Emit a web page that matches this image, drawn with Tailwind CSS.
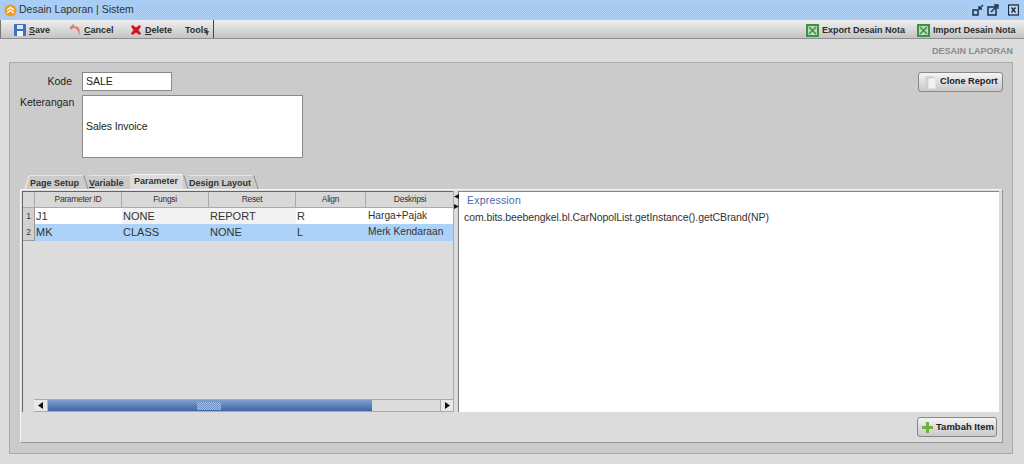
<!DOCTYPE html>
<html lang="id">
<head>
    <meta charset="UTF-8">
    <title>Desain Laporan | Sistem</title>
    <script src="https://cdn.jsdelivr.net/npm/@tailwindcss/browser@4"></script>
</head>
<body class="w-[1024px] h-[464px] overflow-hidden bg-[#dcdcdc] font-['Liberation_Sans',sans-serif] text-[10.5px] text-[#222]">
    <!-- Title bar -->
    <header class="h-[20px] bg-[#a9cdf5] flex items-center pl-[4px]">
        <svg width="13" height="13" viewBox="0 0 13 13"><circle cx="6.5" cy="6.5" r="6" fill="#f09a1e"/><path d="M3 6l3.500-2.500L10 6M3 9l3.500-2.500L10 9" fill="none" stroke="#fff" stroke-width="1.500"/></svg>
        <span class="ml-[2px] w-[118px] text-[10.500px] text-[#333] whitespace-nowrap">Desain Laporan | Sistem</span>
        <div class="w-[830px] h-[15px] bg-[repeating-conic-gradient(#9bc0ec_0_25%,#b4d4f7_0_50%)] bg-[length:2px_2px]"></div>
        <div class="flex items-center pl-[5px]">
            <svg width="12" height="12" viewBox="0 0 12 12" fill="none" stroke="#1c2f4a"><rect x="1" y="6" width="5" height="5" stroke-width="1.500"/><path d="M11 1L7 5M7 2v3h3" stroke-width="1.300"/></svg>
            <svg class="ml-[3px]" width="12" height="12" viewBox="0 0 12 12" fill="none" stroke="#1c2f4a"><rect x="1" y="3" width="8" height="8" stroke-width="1.500"/><path d="M4 8l7-7M7 1h4v4" stroke-width="1.300"/></svg>
            <svg class="ml-[9px]" width="11" height="12" viewBox="0 0 11 12" fill="#c5d9f0" stroke="#1c2f4a"><rect x="0.500" y="1" width="10" height="10" stroke-width="1.300"/><path d="M3.500 3.500l4 5M7.500 3.500l-4 5" stroke-width="1.500"/></svg>
        </div>
    </header>

    <!-- Toolbar -->
    <div class="h-[19px] border-b border-b-[#8f8f8f] bg-gradient-to-b from-[#f0f0f0] to-[#c4c4c4] flex items-center font-bold text-[9px] text-[#2c2c2c] whitespace-nowrap">
        <div class="flex items-center h-full w-[214px] border-x border-x-[#777] border-r-[#444] pl-[13px] pt-[2px]">
            <svg width="12" height="12" viewBox="0 0 12 12"><rect width="12" height="12" rx="1" fill="#3f6fc0"/><rect x="3" y="1" width="6" height="4" fill="#dce8f8"/><rect x="3" y="7" width="6" height="5" fill="#eef3fb"/></svg>
            <span class="ml-[3px] w-[39px] pt-[1px]"><u>S</u>ave</span>
            <svg width="14" height="14" viewBox="0 0 14 14"><path d="M5 1L1 5l3 2 1-2c3 0 5 2 6 8 2-5 1-10-5-10V1z" fill="#e9776c" stroke="#d0c8c4" stroke-width="0.500"/></svg>
            <span class="ml-[2px] w-[46px] pt-[1px]"><u>C</u>ancel</span>
            <svg width="12" height="12" viewBox="0 0 12 12"><path d="M2.500 1L6 3.500 9.500 1 11 2.500 8.500 6 11 9.500 9.500 11 6 8.500 2.500 11 1 9.500 3.500 6 1 2.500z" fill="#d3141c"/></svg>
            <span class="ml-[3px] w-[40px] pt-[1px]"><u>D</u>elete</span>
            <span class="pt-[1px]">Tools</span>
            <svg class="ml-[-3px] mt-[7px]" width="4" height="5" viewBox="0 0 4 5"><path d="M0 0h4L2 5z" fill="#444"/></svg>
        </div>
        <div class="ml-auto flex items-center pt-[2px]">
            <svg width="13" height="13" viewBox="0 0 13 13"><rect width="13" height="13" fill="#3f8f4a"/><rect x="2" y="2" width="9" height="9" fill="#b9dcb9"/><path d="M3 3l7 7M10 3l-7 7" stroke="#3f8f4a" stroke-width="1.500"/></svg>
            <span class="ml-[3px] w-[95px] pt-[1px]">Export Desain Nota</span>
            <svg width="13" height="13" viewBox="0 0 13 13"><rect width="13" height="13" fill="#3f8f4a"/><rect x="2" y="2" width="9" height="9" fill="#b9dcb9"/><path d="M3 3l7 7M10 3l-7 7" stroke="#3f8f4a" stroke-width="1.500"/></svg>
            <span class="ml-[3px] w-[91px] pt-[1px]">Import Desain Nota</span>
        </div>
    </div>

    <!-- Page heading -->
    <div class="h-[23px] flex items-center justify-end pr-[11px] pt-[3px] font-bold text-[9px] text-[#8a8a8a]">DESAIN LAPORAN</div>

    <!-- Main panel -->
    <main class="mx-[9px] w-[1004px] h-[392px] bg-[#cbcbcb] border border-[#aaaaaa] px-[10px] pt-[9px]">
        <div class="flex justify-between h-[102px]">
            <div class="grid grid-cols-[62px_221px] gap-y-[4px] content-start">
                <label class="text-right pr-[10px] leading-[18px]">Kode</label>
                <div class="w-[90px] h-[19px] bg-white border border-[#8a8a8a] pl-[3px] leading-[17px]">SALE</div>
                <label class="text-right pr-[10px] leading-[14px]">Keterangan</label>
                <div class="h-[63px] bg-white border border-[#8a8a8a] pl-[3px] flex items-center tracking-[-0.08px]">Sales Invoice</div>
            </div>
            <button class="mr-[-1px] w-[85px] h-[20px] bg-gradient-to-b from-[#f4f4f4] to-[#c9c9c9] border border-[#888] rounded-[3px] flex items-center pl-[6px] font-bold text-[9.200px] whitespace-nowrap">
                <svg width="11" height="13" viewBox="0 0 11 13"><rect x="0" y="0" width="8" height="10" fill="#d5d5d5"/><rect x="3" y="2" width="8" height="11" fill="#f2f2f2" stroke="#bbb" stroke-width="0.500"/></svg>
                <span class="ml-[4px]">Clone Report</span>
            </button>
        </div>

        <!-- Tabs -->
        <div class="flex items-end h-[15px] pl-[4px] font-bold text-[9px] text-[#333] whitespace-nowrap">
            <svg class="ml-[1px]" width="5" height="14" viewBox="0 0 5 14"><path d="M0 14L4 1h1" fill="none" stroke="#f2f2f2"/></svg>
            <div class="w-[53px] h-[14px] leading-[14px] border-t border-t-[#e6e6e6]">Page Setup</div>
            <svg width="6" height="14" viewBox="0 0 6 14"><path d="M0 1h1l4 13" fill="none" stroke="#909090"/></svg>
            <div class="w-[41px] h-[14px] leading-[14px] border-t border-t-[#e6e6e6]"><u>V</u>ariable</div>
            <div class="w-[53px] h-[15px] leading-[13px] pl-[4px] border-t border-t-[#f5f5f5] bg-[#dcdcdc] rounded-t-[3px]">Parameter</div>
            <svg width="6" height="14" viewBox="0 0 6 14"><path d="M0 1h1l4 13" fill="none" stroke="#909090"/></svg>
            <div class="w-[64px] h-[14px] leading-[14px] border-t border-t-[#e6e6e6]">Design Layout</div>
            <svg width="6" height="14" viewBox="0 0 6 14"><path d="M0 1h1l4 13" fill="none" stroke="#909090"/></svg>
        </div>

        <!-- Tab pane -->
        <section class="w-[983px] h-[254px] bg-[#dcdcdc] border border-t-[#f5f5f5] border-l-[#f5f5f5] border-r-[#999] border-b-[#999] pt-[1px] pl-[1px]">
            <div class="flex h-[221px]">
                <!-- Table -->
                <div class="w-[431px] flex flex-col border-t border-l border-[#666]">
                    <div class="grid grid-cols-[12px_87px_87px_87px_70px_88px] h-[16px] text-center text-[8.500px] tracking-[-0.3px] text-[#333] bg-[#d8d8d8] leading-[15px]">
                        <div class="border-r border-b border-[#aaa]"></div>
                        <div class="border-r border-b border-[#aaa]">Parameter ID</div>
                        <div class="border-r border-b border-[#aaa]">Fungsi</div>
                        <div class="border-r border-b border-[#aaa]">Reset</div>
                        <div class="border-r border-b border-[#aaa]">Align</div>
                        <div class="border-b border-[#aaa]">Deskripsi</div>
                    </div>
                    <div class="grid grid-cols-[12px_87px_87px_87px_70px_88px] h-[16px] text-[11px] leading-[16px] text-[#333]">
                        <div class="bg-[#d0d0d0] text-[8.500px] text-center border-r border-b border-[#999]">1</div>
                        <div class="bg-white pl-[1px]">J1</div>
                        <div class="bg-[#f2f2f2] pl-[1px]">NONE</div>
                        <div class="bg-[#f2f2f2] pl-[1px]">REPORT</div>
                        <div class="bg-white pl-[1px]">R</div>
                        <div class="bg-white pl-[2px] text-[10.200px]">Harga+Pajak</div>
                    </div>
                    <div class="grid grid-cols-[12px_87px_87px_87px_70px_88px] h-[17px] text-[11px] leading-[16px] text-[#333]">
                        <div class="bg-[#d0d0d0] text-[8.500px] text-center border-r border-b border-[#999]">2</div>
                        <div class="bg-[#acd2f8] pl-[1px]">MK</div>
                        <div class="bg-[#acd2f8] pl-[1px]">CLASS</div>
                        <div class="bg-[#acd2f8] pl-[1px]">NONE</div>
                        <div class="bg-[#acd2f8] pl-[1px]">L</div>
                        <div class="bg-[#acd2f8] pl-[2px] text-[10.200px]">Merk Kendaraan</div>
                    </div>
                    <div class="flex-1"></div>
                    <!-- Horizontal scrollbar -->
                    <div class="ml-[11px] h-[13px] flex items-stretch border-y border-[#aaa]">
                        <div class="w-[13px] bg-[#e8e8e8] flex items-center justify-center"><svg width="5" height="7" viewBox="0 0 5 7"><path d="M5 0v7L0 3.500z" fill="#111"/></svg></div>
                        <div class="w-[325px] bg-gradient-to-b from-[#7f9fd0] to-[#3f66a5] border-l border-[#9cc0ee] flex items-center justify-center pr-[3px]"><div class="w-[24px] h-[8px] bg-[repeating-conic-gradient(#6f8fc4_0_25%,#a3bde3_0_50%)] bg-[length:2px_2px]"></div></div>
                        <div class="flex-1 bg-[#dcdcdc] border-r border-[#aaa]"></div>
                        <div class="w-[12px] bg-[#e8e8e8] flex items-center justify-center"><svg width="5" height="7" viewBox="0 0 5 7"><path d="M0 0v7L5 3.500z" fill="#111"/></svg></div>
                    </div>
                </div>
                <!-- Splitter -->
                <div class="w-[6px] flex flex-col items-center pt-[3px] gap-[5px] border-l border-l-[#aaa] border-r border-r-[#777]">
                    <svg width="5" height="5" viewBox="0 0 5 5"><path d="M5 0v5L0 2.500z" fill="#111"/></svg>
                    <svg width="5" height="5" viewBox="0 0 5 5"><path d="M0 0v5L5 2.500z" fill="#111"/></svg>
                </div>
                <!-- Expression -->
                <div class="w-[540px] bg-white border-t border-[#888] pl-[5px]">
                    <div class="pl-[3px] pt-[1px] leading-[14px] text-[#4b68ad] tracking-[0.2px]">Expression</div>
                    <div class="pt-[3px] leading-[14px] text-[#333] tracking-[-0.08px] whitespace-nowrap">com.bits.beebengkel.bl.CarNopolList.getInstance().getCBrand(NP)</div>
                </div>
            </div>
            <div class="flex justify-end pr-[5px] pt-[5px]">
                <button class="w-[80px] h-[20px] bg-gradient-to-b from-[#f4f4f4] to-[#c9c9c9] border border-[#888] rounded-[3px] flex items-center pl-[3px] font-bold text-[9.500px] whitespace-nowrap">
                    <svg width="13" height="13" viewBox="0 0 13 13"><path d="M5 1h3v4h4v3H8v4H5V8H1V5h4z" fill="#6db33f"/></svg>
                    <span class="ml-[2px]">Tambah Item</span>
                </button>
            </div>
        </section>
    </main>
</body>
</html>
